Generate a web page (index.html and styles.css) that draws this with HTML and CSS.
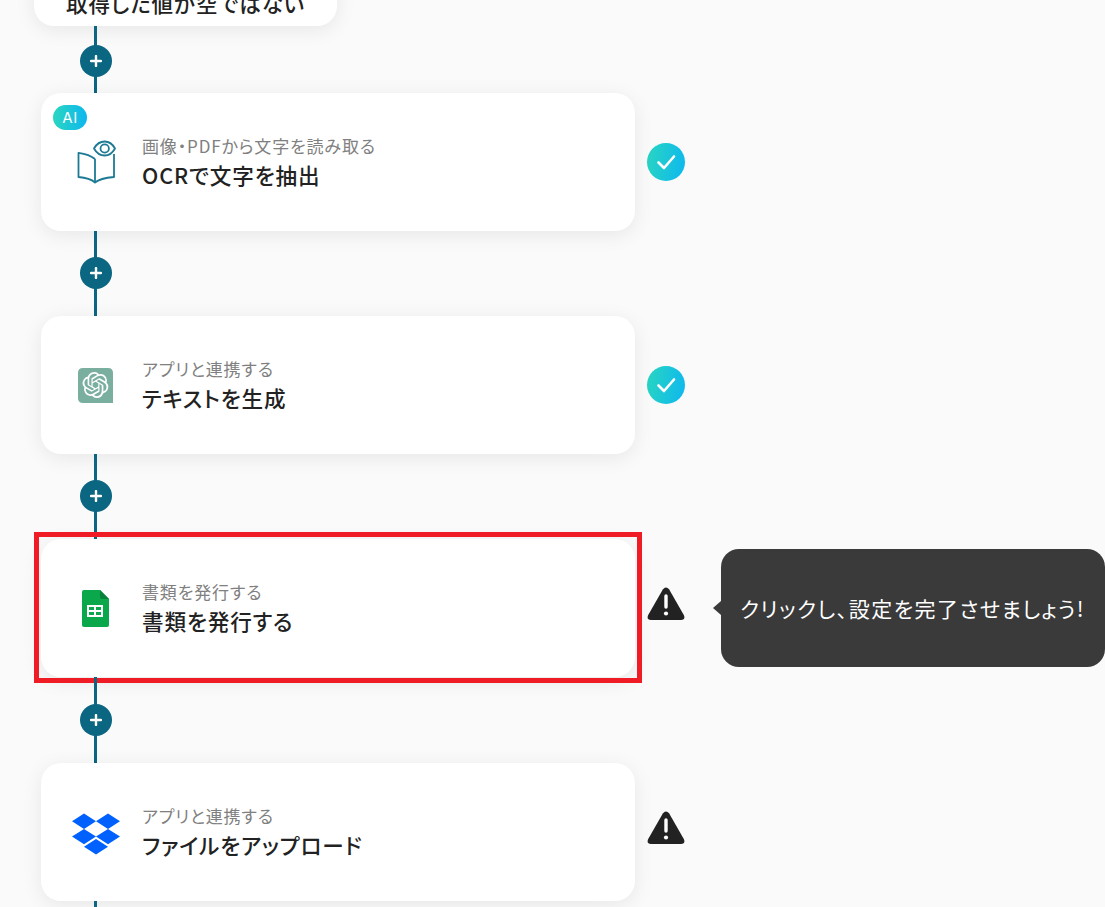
FILE: index.html
```html
<!DOCTYPE html>
<html lang="ja">
<head>
<meta charset="utf-8">
<title>フロー</title>
<link rel="stylesheet" href="styles.css">
</head>
<body>
  <div class="flow">
    <div class="branch-card">取得した値が空ではない</div>

    <div class="connector connector-first"><span class="plus"><svg width="12" height="12" viewBox="0 0 12 12"><path d="M6 1v10M1 6h10" stroke="#fff" stroke-width="2.4" stroke-linecap="round"/></svg></span></div>

    <div class="step">
      <div class="card">
        <span class="ai-badge">AI</span>
        <div class="card-icon">
          <svg width="48" height="48" viewBox="0 0 48 48" fill="none" stroke="#1d7a94" stroke-width="1.8" stroke-linejoin="round">
            <path d="M23 21C19 17.500 12 15.500 6.500 14.800V39C12 39.500 19 41 23 44.500C27 41 36 39.500 42 39V16"/>
            <path d="M23 21V44.500"/>
            <path d="M22 10.500C24.500 6 28.500 3.500 32.700 3.500C37 3.500 40.500 6 43 10.500C40.500 15 37 17.500 32.700 17.500C28.500 17.500 24.500 15 22 10.500Z" fill="#fff"/>
            <circle cx="32.700" cy="10.500" r="4.200"/>
          </svg>
        </div>
        <div class="card-text">
          <p class="card-sub">画像・PDFから文字を読み取る</p>
          <p class="card-title">OCRで文字を抽出</p>
        </div>
      </div>
      <span class="status status-done"><svg width="38" height="38" viewBox="0 0 38 38" fill="none"><path d="M11.500 19.500L17 25L27 13.500" stroke="#fff" stroke-width="2.600" stroke-linecap="round" stroke-linejoin="round"/></svg></span>
    </div>

    <div class="connector"><span class="plus"><svg width="12" height="12" viewBox="0 0 12 12"><path d="M6 1v10M1 6h10" stroke="#fff" stroke-width="2.4" stroke-linecap="round"/></svg></span></div>

    <div class="step">
      <div class="card">
        <div class="card-icon">
          <svg width="48" height="48" viewBox="0 0 48 48">
            <path d="M11 7H36Q41 7 41 12V42H11Q6 42 6 37V12Q6 7 11 7Z" fill="#7aae9e"/>
            <g transform="translate(10.500 11) scale(1.080)">
              <path fill="#fff" d="M22.2819 9.8211a5.9847 5.9847 0 0 0-.5157-4.9108 6.0462 6.0462 0 0 0-6.5098-2.9A6.0651 6.0651 0 0 0 4.9807 4.1818a5.9847 5.9847 0 0 0-3.9977 2.9 6.0462 6.0462 0 0 0 .7427 7.0966 5.98 5.98 0 0 0 .511 4.9107 6.051 6.051 0 0 0 6.5146 2.9001A5.9847 5.9847 0 0 0 13.2599 24a6.0557 6.0557 0 0 0 5.7718-4.2058 5.9894 5.9894 0 0 0 3.9977-2.9001 6.0557 6.0557 0 0 0-.7475-7.0729zm-9.022 12.6081a4.4755 4.4755 0 0 1-2.8764-1.0408l.1419-.0804 4.7783-2.7582a.7948.7948 0 0 0 .3927-.6813v-6.7369l2.02 1.1686a.071.071 0 0 1 .038.052v5.5826a4.504 4.504 0 0 1-4.4945 4.4944zm-9.6607-4.1254a4.4708 4.4708 0 0 1-.5346-3.0137l.142.0852 4.783 2.7582a.7712.7712 0 0 0 .7806 0l5.8428-3.3685v2.3324a.0804.0804 0 0 1-.0332.0615L9.74 19.9502a4.4992 4.4992 0 0 1-6.1408-1.6464zM2.3408 7.8956a4.485 4.485 0 0 1 2.3655-1.9728V11.6a.7664.7664 0 0 0 .3879.6765l5.8144 3.3543-2.0201 1.1685a.0757.0757 0 0 1-.071 0l-4.8303-2.7865A4.504 4.504 0 0 1 2.3408 7.872zm16.5963 3.8558L13.1038 8.364 15.1192 7.2a.0757.0757 0 0 1 .071 0l4.8303 2.7913a4.4944 4.4944 0 0 1-.6765 8.1042v-5.6772a.79.79 0 0 0-.407-.667zm2.0107-3.0231l-.142-.0852-4.7735-2.7818a.7759.7759 0 0 0-.7854 0L9.409 9.2297V6.8974a.0662.0662 0 0 1 .0284-.0615l4.8303-2.7866a4.4992 4.4992 0 0 1 6.6802 4.66zM8.3065 12.863l-2.02-1.1638a.0804.0804 0 0 1-.038-.0567V6.0742a4.4992 4.4992 0 0 1 7.3757-3.4537l-.142.0805L8.704 5.459a.7948.7948 0 0 0-.3927.6813zm1.0976-2.3654l2.602-1.4998 2.6069 1.4998v2.9994l-2.5974 1.5001-2.6067-1.4997Z"/>
            </g>
          </svg>
        </div>
        <div class="card-text">
          <p class="card-sub">アプリと連携する</p>
          <p class="card-title">テキストを生成</p>
        </div>
      </div>
      <span class="status status-done"><svg width="38" height="38" viewBox="0 0 38 38" fill="none"><path d="M11.500 19.500L17 25L27 13.500" stroke="#fff" stroke-width="2.600" stroke-linecap="round" stroke-linejoin="round"/></svg></span>
    </div>

    <div class="connector"><span class="plus"><svg width="12" height="12" viewBox="0 0 12 12"><path d="M6 1v10M1 6h10" stroke="#fff" stroke-width="2.4" stroke-linecap="round"/></svg></span></div>

    <div class="step">
      <div class="card card-selected">
        <div class="card-icon">
          <svg width="48" height="48" viewBox="0 0 48 48">
            <path d="M12 6H28L37 15V41Q37 43 35 43H12Q10 43 10 41V8Q10 6 12 6Z" fill="#0aa84b"/>
            <path d="M28 6L37 15H30Q28 15 28 13Z" fill="#06803a"/>
            <path d="M15 21H31V33H15ZM17 23V26H22V23ZM24 23V26H29V23ZM17 28V31H22V28ZM24 28V31H29V28Z" fill="#fff" fill-rule="evenodd"/>
          </svg>
        </div>
        <div class="card-text">
          <p class="card-sub">書類を発行する</p>
          <p class="card-title">書類を発行する</p>
        </div>
      </div>
      <span class="status status-warn"><svg width="38" height="38" viewBox="0 0 38 38"><path d="M15.800 3.500Q19 -0.500 22.200 3.500L36.800 29Q38.800 34 34 34H4Q-0.800 34 1.200 29Z" fill="#222"/><path d="M19 10V21" stroke="#fff" stroke-width="3.400" stroke-linecap="round"/><circle cx="19" cy="27.500" r="2.100" fill="#fff"/></svg></span>
      <div class="tooltip">クリックし、設定を完了させましょう!</div>
    </div>

    <div class="connector connector-long"><span class="plus"><svg width="12" height="12" viewBox="0 0 12 12"><path d="M6 1v10M1 6h10" stroke="#fff" stroke-width="2.4" stroke-linecap="round"/></svg></span></div>

    <div class="step">
      <div class="card">
        <div class="card-icon">
          <svg class="dropbox" width="48" height="48" viewBox="0 0 24 24"><path fill="#0061ff" d="M6 1.807L0 5.629l6 3.822 6.001-3.822L6 1.807zM18 1.807l-6 3.822 6 3.822 6-3.822-6-3.822zM0 13.274l6 3.822 6.001-3.822L6 9.452l-6 3.822zM18 9.452l-6 3.822 6 3.822 6-3.822-6-3.822zM6 18.371l6.001 3.822 6-3.822-6-3.822L6 18.371z"/></svg>
        </div>
        <div class="card-text">
          <p class="card-sub">アプリと連携する</p>
          <p class="card-title">ファイルをアップロード</p>
        </div>
      </div>
      <span class="status status-warn"><svg width="38" height="38" viewBox="0 0 38 38"><path d="M15.800 3.500Q19 -0.500 22.200 3.500L36.800 29Q38.800 34 34 34H4Q-0.800 34 1.200 29Z" fill="#222"/><path d="M19 10V21" stroke="#fff" stroke-width="3.400" stroke-linecap="round"/><circle cx="19" cy="27.500" r="2.100" fill="#fff"/></svg></span>
    </div>

    <div class="connector connector-end"></div>
  </div>
</body>
</html>
```

FILE: styles.css
```css
* {
  margin: 0;
  padding: 0;
  box-sizing: border-box;
}

html, body {
  height: 907px;
  overflow: hidden;
}

body {
  background-color: #fafafa;
  color: #222;
  font-family: "Noto Sans CJK JP", "Noto Sans", sans-serif;
  font-feature-settings: "palt";
}

.flow {
  display: flex;
  flex-direction: column;
  align-items: flex-start;
  padding-left: 41px;
  margin-top: -54px;
}

.branch-card {
  width: 303px;
  height: 80px;
  margin-left: -7px;
  padding-top: 40px;
  background: #fff;
  border-radius: 20px;
  box-shadow: 0 4px 20px rgba(0, 0, 0, 0.08);
  font-size: 21.6px;
  font-weight: 500;
  line-height: 34px;
  letter-spacing: 0.04em;
  text-align: center;
}

.connector {
  position: relative;
  display: flex;
  align-items: center;
  width: 32px;
  height: 85px;
  margin-left: 39px;
  padding-bottom: 1px;
}

.connector::before {
  content: "";
  position: absolute;
  top: 0;
  bottom: 0;
  left: 14px;
  width: 3px;
  background: #0b6682;
}

.connector-first {
  height: 67px;
  padding-top: 4px;
}

.connector-long {
  height: 86px;
}

.connector-end {
  height: 6px;
  padding: 0;
}

.plus {
  position: relative;
  display: flex;
  align-items: center;
  justify-content: center;
  width: 32px;
  height: 32px;
  border-radius: 50%;
  background: #0b6682;
}

.step {
  display: flex;
  align-items: center;
  height: 138px;
}

.card {
  position: relative;
  display: flex;
  align-items: center;
  width: 594px;
  height: 138px;
  padding-left: 31px;
  background: #fff;
  border-radius: 20px;
  box-shadow: 0 4px 20px rgba(0, 0, 0, 0.08);
}

.card-selected::after {
  content: "";
  position: absolute;
  top: -7px;
  left: -7px;
  right: -7px;
  bottom: -6px;
  border: 5px solid #ef1c25;
}

.ai-badge {
  position: absolute;
  top: 12px;
  left: 12px;
  width: 34px;
  height: 25px;
  border-radius: 13px;
  background: linear-gradient(90deg, #2ad6c0, #0db7f0);
  color: #fff;
  font-family: "Inter", sans-serif;
  font-size: 15px;
  font-weight: 400;
  letter-spacing: 0.5px;
  line-height: 25px;
  text-align: center;
}

.card-icon {
  display: flex;
  flex-shrink: 0;
  width: 48px;
  height: 48px;
  margin-right: 22px;
}

.dropbox {
  position: relative;
  top: 2px;
}

.card-text {
  margin-top: 0;
}

.card-sub {
  color: #808080;
  font-size: 17px;
  letter-spacing: 0.05em;
  line-height: 26px;
}

.card-title {
  font-size: 21.6px;
  font-weight: 500;
  letter-spacing: 0.04em;
  line-height: 32px;
}

.status {
  display: block;
  width: 38px;
  height: 38px;
  margin-left: 12px;
}

.status-done {
  border-radius: 50%;
  background: linear-gradient(100deg, #2ad6c0, #0db7f0);
}

.status-warn {
  margin-bottom: 6px;
}

.status svg {
  display: block;
}

.tooltip {
  position: relative;
  width: 384px;
  height: 118px;
  margin-left: 36px;
  padding-left: 19px;
  border-radius: 18px;
  background: #3a3a3a;
  color: #fff;
  font-size: 21px;
  letter-spacing: 1.5px;
  line-height: 119px;
  white-space: nowrap;
}

.tooltip::before {
  content: "";
  position: absolute;
  top: 52px;
  left: -8px;
  border-top: 7px solid transparent;
  border-bottom: 7px solid transparent;
  border-right: 8px solid #3a3a3a;
}
```
